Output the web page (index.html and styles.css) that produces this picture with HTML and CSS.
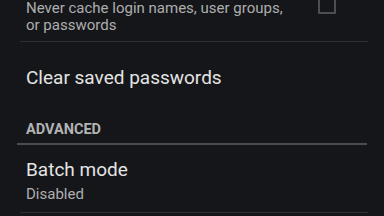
FILE: index.html
```html
<!DOCTYPE html>
<html>
<head>
<meta charset="utf-8">
<link rel="stylesheet" href="styles.css">
</head>
<body>
<div class="list">
  <div class="item item-check">
    <div class="summary">Never cache login names, user groups,<br>or passwords</div>
    <div class="checkbox"></div>
  </div>
  <div class="item item-clear">
    <div class="title">Clear saved passwords</div>
  </div>
  <div class="header">ADVANCED</div>
  <div class="item item-batch">
    <div class="title">Batch mode</div>
    <div class="summary">Disabled</div>
  </div>
</div>
</body>
</html>
```
FILE: styles.css
```css
html, body {
  margin: 0;
  padding: 0;
  background: #15161a;
  width: 384px;
  height: 216px;
  overflow: hidden;
  font-family: Roboto, "Liberation Sans", sans-serif;
}
.list {
  display: flex;
  flex-direction: column;
}
.item-check {
  display: flex;
  align-items: flex-start;
  height: 42px;
  box-sizing: border-box;
  margin: 0 16px 0 20px;
  padding: 0 0 0 6px;
  border-bottom: 1px solid #2e2f33;
}
.item-check .summary {
  flex: 1;
  font-size: 15px;
  line-height: 17px;
}
.checkbox {
  width: 14px;
  height: 17px;
  margin-top: -7px;
  margin-right: 32px;
  border: 2px solid #4d4e52;
  border-radius: 1px;
}
.summary {
  color: #aeaeae;
}
.title {
  color: #e4e4e4;
  font-size: 19px;
  line-height: 22px;
}
.item-clear {
  height: 64px;
  box-sizing: border-box;
  padding: 25px 0 0 26px;
}
.header {
  margin: 0 17px 0 17px;
  padding: 16px 0 5px 9px;
  font-size: 14.5px;
  line-height: 16px;
  font-weight: bold;
  color: #b3b3b3;
  border-bottom: 2px solid #4a4b4f;
}
.item-batch {
  margin: 0 16px 0 20px;
  padding: 14px 0 0 6px;
  height: 68px;
  box-sizing: border-box;
  border-bottom: 1px solid #2e2f33;
}
.item-batch .title {
  margin-bottom: 4px;
}
.item-batch .summary {
  font-size: 15px;
  line-height: 18px;
}
```
